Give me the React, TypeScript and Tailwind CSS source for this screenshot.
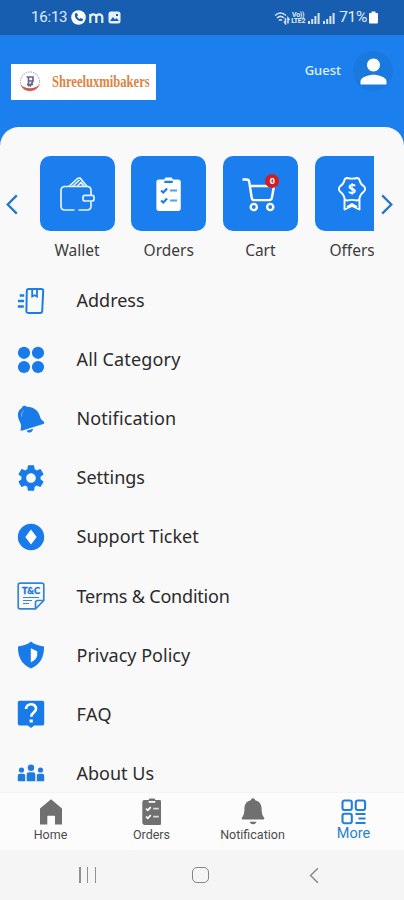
// ReactJS
import { ReactNode, useState } from "react";

// Icons
import { MdPerson, MdSettings } from "react-icons/md";

const AddressIcon = () => (
    <svg width="28" height="28" viewBox="0 0 28 28" fill="none" stroke="#1b7de6" strokeWidth="2">
        <path d="M11.7 2h12.6q2 0 1.9 2l-1 20q-.1 1.9-2 1.9H11.4q-2.1 0-2-2L9.8 4q.1-2 1.9-2z" />
        <path d="M15.2 2.5v7l2.4-1.3 2.4 1.3v-7" strokeWidth="1.8" />
        <path d="M2.700 8.500h4.500M1 14h6M.8 19.500h6" strokeWidth="2.600" />
    </svg>
);

const CategoryIcon = () => (
    <svg width="28" height="28" viewBox="0 0 28 28" fill="#187be9">
        <circle cx="7" cy="6.8" r="6.1" />
        <circle cx="21" cy="6.8" r="6.1" />
        <circle cx="7" cy="21" r="6.1" />
        <circle cx="21" cy="21" r="6.1" />
    </svg>
);

const TiltedBellIcon = () => (
    <svg width="28" height="28" viewBox="0 0 28 28" fill="#187be9">
        <path d="M5 2.8C5 .3 9 0 9.5 1.800c6.500-.3 12 3.700 13.500 9.700.6 2.600 1.900 3.600 3.800 5.200.9.900.6 1.800-.5 2.200L5.500 25.600c-1.400.4-2.200-.5-1.800-1.800.8-3 .2-5-1.100-7.500C-.2 11 .4 5.500 5 2.800z" />
        <path d="M9.500 25.700l6.500-2c.1 3.900-4.800 5.300-6.500 2z" />
        <path d="M4.600 11.500C4.300 9 5 7 6.800 5.800" stroke="#8dbff5" strokeWidth=".9" fill="none" />
    </svg>
);

const TicketIcon = () => (
    <svg width="28" height="28" viewBox="0 0 28 28">
        <circle cx="14" cy="14" r="13.2" fill="#187be9" />
        <path d="M14 6.5l5.7 7.5-5.7 7.5L8.3 14z" fill="#fff" />
    </svg>
);

const TermsIcon = () => (
    <svg width="28" height="28" viewBox="0 0 28 28" fill="none" stroke="#3286d8" strokeWidth="1.7">
        <path d="M3 1.2h22q1.8 0 1.800 1.8v15.500l-8.300 8.300H3q-1.800 0-1.800-1.800V3q0-1.800 1.800-1.800z" />
        <path d="M26.500 18.500h-5.700q-2.300 0-2.300 2.300v5.700" />
        <path d="M6 15.500h16M6 18.500h9M6 21.500h6" strokeWidth="1.1" />
        <text x="5" y="11.6" fill="#1b77d6" stroke="#1b77d6" strokeWidth=".3" fontFamily="Lato, sans-serif" fontSize="8.5" fontWeight="900" textLength="18" lengthAdjust="spacingAndGlyphs">
            T&amp;C
        </text>
    </svg>
);

const ShieldIcon = () => (
    <svg width="28" height="28" viewBox="0 0 28 28">
        <path d="M14 .6c3.400 2.800 7.500 4.400 13 4.900.4 10-3.600 18-13 22C4.600 23.500.6 15.500 1 5.500 6.500 5 10.600 3.400 14 .6z" fill="#187be9" />
        <path d="M13.800 7.200l6.400 3v4.300c-.5 3-3 5.200-6.400 6.800z" fill="#fff" />
    </svg>
);

const FaqIcon = () => (
    <svg width="28" height="28" viewBox="0 0 28 28">
        <path d="M2.500.7h23q1.700 0 1.700 1.700v21.300q0 1.700-1.700 1.700h-8.300L14 28l-3.200-2.600H2.500q-1.700 0-1.700-1.700V2.400Q.8.700 2.500.7z" fill="#187be9" />
        <path d="M9 9c.2-6.300 10-6.300 10-.2 0 4-4.800 3.700-4.800 8" fill="none" stroke="#fff" strokeWidth="2.7" />
        <path d="M12.600 19.500h3.200v3h-3.200z" fill="#fff" />
    </svg>
);

const AboutIcon = () => (
    <svg width="28" height="28" viewBox="0 0 28 28" fill="#1f7be0">
        <circle cx="14" cy="8.7" r="3.2" />
        <circle cx="4.5" cy="11" r="2.6" />
        <circle cx="23.5" cy="11" r="2.6" />
        <path d="M9.700 22.200V15.500q0-2.300 2.300-2.300h4q2.300 0 2.300 2.300v6.700z" />
        <path d="M.8 22.200v-5.500q0-1.900 1.900-1.900h3.600q1.900 0 1.900 1.900v5.500z" />
        <path d="M19.800 22.200v-5.500q0-1.900 1.900-1.900h3.600q1.900 0 1.900 1.900v5.500z" />
    </svg>
);

const WalletIcon = () => (
    <svg width="36" height="36" viewBox="0 0 36 36" fill="none" stroke="#e8f3ff" strokeWidth="1.7">
        <path d="M15.500 34H6q-4 0-4-4V14.500q0-4 4-4h22q4 0 4 4V19M32 25.500V30q0 4-4 4h-8.500" />
        <path d="M10 10.500l8.500-8 2.500-.5 7 8.500M13.500 10.500l7-6.500M18 10.500l4-4 3 4" />
        <rect x="24" y="19.300" width="11" height="5.700" rx="2" />
    </svg>
);

const ClipboardIcon = ({ size, color, mark }: { size: number; color: string; mark: string }) => (
    <svg width={size * 0.74} height={size} viewBox="0 0 25 34">
        <path d="M3 2.500h5L9.500.5h6l1.500 2h5q2.700 0 2.700 2.700v26q0 2.700-2.700 2.700H3q-2.700 0-2.700-2.700v-26Q.3 2.500 3 2.500z" fill={color} />
        <path d="M8.300 4.800h8.400M5 13.500l2.200 2 3.800-4M5 23.500l2.200 2 3.800-4" fill="none" stroke={mark} strokeWidth="2.200" />
        <path d="M14 13.500h7M14 23.500h7" stroke={mark} strokeWidth="2.200" opacity=".75" />
    </svg>
);

const CartIcon = () => (
    <svg width="38" height="36" viewBox="0 0 38 36" fill="none" stroke="#fff" strokeWidth="2.4">
        <path d="M1.500 3.500h4q2.300 0 2.700 2.300l2.500 16q.3 2.300 2.700 2.300h14.800q2.200 0 2.700-2.300L33 10H9" strokeLinejoin="round" />
        <circle cx="12.800" cy="31" r="3.100" />
        <circle cx="29.200" cy="31" r="3.100" />
    </svg>
);

const OffersIcon = () => (
    <svg width="30" height="36" viewBox="0 0 30 36" fill="none" stroke="#fff" strokeWidth="1.9" strokeLinejoin="round">
        <path d="M10 2q5 1.300 10 0 2 0 2.500 2 .7 4 4.700 6.500 1.800 2.500 0 4.700-4 3-4.700 7-.7 2.300-2.500 2.300-5-1.200-10 0-1.800 0-2.500-2.300-.7-4-4.700-7-1.800-2.200 0-4.700Q6.800 8 7.500 4 8 2 10 2z" />
        <path d="M7.500 23V33.500l7.500-3.500 7.500 3.500V23M10 31l5-3 5 3" />
        <text x="15" y="18.300" textAnchor="middle" fill="#fff" stroke="none" fontFamily="Noto Sans, sans-serif" fontSize="14" fontWeight="700">
            $
        </text>
    </svg>
);

const HomeIcon = () => (
    <svg width="24" height="26" viewBox="0 0 24 26" fill="#707070">
        <path d="M12 .3l11 9.2V25.500h-7V17.500q0-.7-.7-.7H9q-.7 0-.7.7v8H1v-16z" />
    </svg>
);

const BellIcon = () => (
    <svg width="24" height="27" viewBox="0 0 24 27" fill="#707070">
        <path d="M12 .3c1.300 0 2 .8 2.100 2 4 .8 6.500 4 6.500 8.200 0 4.700.7 6.700 2.200 8.700.9 1.200.5 2.300-1 2.300H2.200c-1.500 0-1.900-1.100-1-2.300 1.500-2 2.200-4 2.200-8.700 0-4.200 2.500-7.400 6.500-8.200.1-1.200.8-2 2.100-2z" />
        <path d="M8.500 23.700h7q-1 2.600-3.500 2.600t-3.500-2.600z" />
    </svg>
);

const MoreIcon = () => (
    <svg width="26" height="26" viewBox="0 0 26 26" fill="none" stroke="#247fdc" strokeWidth="2.1">
        <rect x="1.500" y="1.500" width="9.300" height="9.500" rx="2" />
        <rect x="14.800" y="1.500" width="9.300" height="9.500" rx="2" />
        <rect x="1.500" y="14.700" width="9.300" height="9.500" rx="2" />
        <path d="M14.500 15h10M17.500 19.500h7M14.500 24h10" />
    </svg>
);

const Chevron = ({ left, className }: { left?: boolean; className: string }) => (
    <svg className={className} viewBox="0 0 12 22" fill="none" stroke="currentColor">
        <path d={left ? "M11 1.500L1.500 11l9.500 9.500" : "M1 1.500l9.500 9.500L1 20.500"} />
    </svg>
);

const Signal = () => (
    <svg width="12" height="12" viewBox="0 0 12 12" fill="#d5e4f5">
        <path d="M0 9h2v3H0zM3.200 7h2v5h-2zM6.400 4h2v8h-2zM9.600 1h2v11h-2z" />
    </svg>
);

const Logo = () => (
    <svg className="shrink-0" width="22" height="24" viewBox="0 0 22 24" fill="none">
        <circle cx="11" cy="11.500" r="9.500" stroke="#bfb8c4" strokeWidth="1.300" strokeDasharray="1.500 1" />
        <path d="M1.700 14.500c2.500 8.500 16 8.500 18.600 0-4 5-14.600 5-18.600 0z" fill="#cf5845" />
        <path d="M7.500 7h6.500v4H9M9.500 6.500v10M14 11l-3 5.500M8 14.500h6" stroke="#665f91" strokeWidth="1.600" />
    </svg>
);

type MenuItem = { label: string; icon: ReactNode; text: string };

const menu: MenuItem[] = [
    { label: "Address", icon: <AddressIcon />, text: "tracking-normal" },
    { label: "All Category", icon: <CategoryIcon />, text: "tracking-[0.15px]" },
    { label: "Notification", icon: <TiltedBellIcon />, text: "tracking-[0.1px]" },
    { label: "Settings", icon: <MdSettings size={32} color="#187be9" className="shrink-0" />, text: "tracking-normal" },
    { label: "Support Ticket", icon: <TicketIcon />, text: "tracking-normal" },
    { label: "Terms & Condition", icon: <TermsIcon />, text: "tracking-[-0.2px]" },
    { label: "Privacy Policy", icon: <ShieldIcon />, text: "tracking-normal" },
    { label: "FAQ", icon: <FaqIcon />, text: "tracking-[0.5px]" },
    { label: "About Us", icon: <AboutIcon />, text: "tracking-normal" },
];

const shortcuts = [
    { label: "Wallet", icon: <WalletIcon /> },
    { label: "Orders", icon: <ClipboardIcon size={34} color="#fff" mark="#1b7bea" /> },
    { label: "Cart", icon: <CartIcon />, badge: "0" },
    { label: "Offers", icon: <OffersIcon /> },
];

const tabs = [
    { label: "Home", icon: <HomeIcon /> },
    { label: "Orders", icon: <ClipboardIcon size={27} color="#707070" mark="#fff" /> },
    { label: "Notification", icon: <BellIcon /> },
    { label: "More", icon: <MoreIcon /> },
];

export default function App() {
    // States
    const [tab, setTab] = useState("More");

    return (
        <div className="flex h-[900px] w-[404px] flex-col overflow-hidden bg-[#1b80ee] font-['Noto_Sans',sans-serif]">
            {/* Status bar */}
            <div className="flex h-[35px] shrink-0 items-center bg-[#175eb0] pl-[31px] pr-[26px] font-['Roboto',sans-serif] text-[#e0ecf9]">
                <span className="text-[15px] tracking-[-0.2px]">16:13</span>
                <svg className="ml-[4px]" width="15" height="15" viewBox="0 0 15 15">
                    <circle cx="7.500" cy="7.500" r="7.300" fill="#fff" />
                    <path d="M4 3.500l2-.5 1 2.500-1 1q.8 1.700 2.500 2.500l1-1L12 9l-.5 2C7 12 3 8 4 3.500z" fill="#175eb0" />
                </svg>
                <svg className="ml-[3px]" width="15" height="14" viewBox="0 0 15 14" fill="none" stroke="#e8f1fb" strokeWidth="2.200">
                    <path d="M1.300 12V3M1.300 6c0-3.500 6-3.500 6 0v6M7.300 6c0-3.500 6-3.500 6 0v6" />
                </svg>
                <svg className="ml-[4px]" width="13" height="13" viewBox="0 0 13 13">
                    <rect x=".5" y=".5" width="12" height="12" rx="2.500" fill="#e8f1fb" />
                    <path d="M2 10l3-4 2 2.500L8.500 7 11 10zM8 3h2v2H8z" fill="#175eb0" />
                </svg>
                <div className="ml-auto flex items-center">
                    <svg width="16" height="14" viewBox="0 0 16 14" fill="none" stroke="#d5e4f5" strokeWidth="1.500">
                        <path d="M1 4.500Q6.500-.5 12 4.500M3 7q3.500-3.300 7 0M5 9.500q1.500-1.500 3 0M11.500 7v5.500l-1.500-2M14 12.500V7l1.500 2" />
                    </svg>
                    <span className="ml-[1px] w-[14px] text-center text-[7px] font-bold leading-[6px] tracking-[-0.3px]">Vo)) LTE2</span>
                    <span className="ml-[3px] flex gap-[3px]">
                        <Signal />
                        <Signal />
                    </span>
                    <span className="ml-[4px] text-[15.500px] tracking-[-0.3px]">71%</span>
                    <svg className="ml-[2px]" width="9" height="13" viewBox="0 0 9 13" fill="#fff">
                        <path d="M2.500.5h4v1.500H8q1 0 1 1V11.500q0 1-1 1H1q-1 0-1-1V3q0-1 1-1h1.500z" />
                    </svg>
                </div>
            </div>

            {/* Header */}
            <header className="flex h-[92px] shrink-0 items-start justify-between pl-[11px] pr-[11px]">
                <div className="mt-[29px] flex h-[36px] w-[145px] items-center overflow-hidden bg-white pl-[8px]">
                    <Logo />
                    <span className="ml-[11px] origin-left scale-x-[0.74] whitespace-nowrap font-['Liberation_Serif',serif] text-[17px] font-bold text-[#dd833f]">
                        Shreeluxmibakers
                    </span>
                </div>
                <div className="mt-[16px] flex items-center">
                    <span className="text-[13px] font-medium text-[#e3f0ff]">Guest</span>
                    <div className="ml-[12px] flex h-[40px] w-[40px] items-center justify-center rounded-full bg-[#1a79de]">
                        <MdPerson size={39} color="#fff" className="shrink-0" />
                    </div>
                </div>
            </header>

            {/* Content */}
            <main className="flex min-h-0 flex-1 flex-col overflow-hidden rounded-t-[19px] bg-[#f9f9f9]">
                <div className="flex shrink-0 pt-[29px]">
                    <div className="flex h-[97px] w-[39.500px] shrink-0 items-center pl-[6px] text-[#2476cc]">
                        <Chevron left className="h-[21px] w-[12px] stroke-[2.400]" />
                    </div>
                    <div className="flex w-[334.500px] gap-[16.700px] overflow-hidden">
                        {shortcuts.map(({ label, icon, badge }) => (
                            <div key={label} className="flex w-[75px] shrink-0 flex-col items-center">
                                <div className="flex h-[75px] w-[75px] items-center justify-center rounded-[10px] bg-[#1b7eee]">
                                    <div className="relative">
                                        {icon}
                                        {badge && (
                                            <span className="absolute -top-[2px] right-0 flex h-[14px] w-[14px] items-center justify-center rounded-full bg-[#d41c24] text-[9px] font-bold text-white">
                                                {badge}
                                            </span>
                                        )}
                                    </div>
                                </div>
                                <span className="mt-[8px] text-[15.500px] leading-[22px] text-[#3c3c3c]">{label}</span>
                            </div>
                        ))}
                    </div>
                    <div className="flex h-[97px] w-[30px] shrink-0 items-center pl-[7px] text-[#2476cc]">
                        <Chevron className="h-[21px] w-[12px] stroke-[2.400]" />
                    </div>
                </div>
                <ul className="mt-[10px]">
                    {menu.map(({ label, icon, text }) => (
                        <li key={label} className="flex h-[59.100px] items-center pl-[16.500px]">
                            <span className="flex w-[28px] shrink-0 items-center justify-center">{icon}</span>
                            <span className={`ml-[32px] whitespace-nowrap text-[18px] text-[#2b2b2b] ${text}`}>{label}</span>
                        </li>
                    ))}
                </ul>
            </main>

            {/* Bottom tabs */}
            <nav className="flex h-[58px] shrink-0 border-t border-[#f4f4f4] bg-[#fcfcfc]">
                {tabs.map(({ label, icon }) => (
                    <button key={label} type="button" className="flex flex-1 flex-col items-center pt-[5px]" onClick={() => setTab(label)}>
                        <span className="flex h-[27px] items-center">{icon}</span>
                        <span
                            className={
                                tab === label
                                    ? "text-[14.500px] leading-[17px] font-['Roboto',sans-serif] text-[#2b7fd3]"
                                    : "mt-[1px] text-[12.500px] leading-[18px] font-['Roboto',sans-serif] text-[#4c4c4c]"
                            }
                        >
                            {label}
                        </span>
                    </button>
                ))}
            </nav>

            {/* System navigation */}
            <div className="flex h-[50px] shrink-0 items-center bg-[#f5f5f5] pl-[79px] text-[#858585]">
                <div className="flex h-[16px] w-[17px] justify-between">
                    <span className="w-[1.500px] bg-[#909090]" />
                    <span className="w-[1.500px] bg-[#909090]" />
                    <span className="w-[1.500px] bg-[#909090]" />
                </div>
                <div className="ml-[96px] h-[16px] w-[17px] rounded-[5px] border-[1.500px] border-[#858585]" />
                <Chevron left className="ml-[100px] h-[17px] w-[10px] stroke-[1.800]" />
            </div>
        </div>
    );
}
